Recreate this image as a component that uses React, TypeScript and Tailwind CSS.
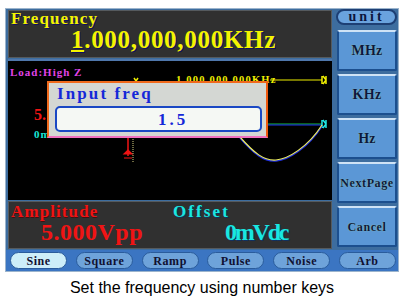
const serif = "font-['Liberation_Serif','Times_New_Roman',serif] font-bold";

function SideButton({ label, small }: { label: string; small?: boolean }) {
  return (
    <div
      className={`h-[41px] flex items-center justify-center bg-[#5b97d6] border-2 border-[#1c4f8e] border-t-[#cfe3f6] rounded-[2px] text-[#0c1640] ${serif} ${
        small ? "text-[12px] tracking-[0.6px]" : "text-[14px] tracking-[0.3px]"
      } [text-shadow:0_0_1px_#9fe0a0]`}
    >
      {label}
    </div>
  );
}

function Tab({ label, active }: { label: string; active?: boolean }) {
  return (
    <div
      className={`h-[17px] rounded-full flex items-center justify-center border border-[#2a5c9c] text-[12px] tracking-[0.6px] text-[#101030] ${serif} ${
        active ? "bg-[#cdeef9]" : "bg-[#6ea3da]"
      }`}
    >
      {label}
    </div>
  );
}

export default function App() {
  const tabs = ["Sine", "Square", "Ramp", "Pulse", "Noise", "Arb"];
  return (
    <div className="w-[404px] h-[300px] bg-white overflow-hidden">
      <div className="ml-[5px] mt-[8px] w-[394px] h-[264px] bg-[#3d6d9f] border border-[#9cb4cc] flex flex-col">
        <div className="flex h-[241px]">
          {/* left: readouts + scope */}
          <div className="w-[324px] ml-[2px] mt-[1px] flex flex-col gap-[1px]">
            <div className="h-[48px] bg-[#303030] border border-[#555a5e] px-[2px]">
              <div className={`text-[17px] leading-[17px] -mt-[1px] tracking-[1.1px] text-[#f4f400] ${serif} [text-shadow:1px_1px_0_#101060]`}>
                Frequency
              </div>
              <div className={`ml-[60px] text-[25px] leading-[25px] tracking-[0.7px] text-[#f4f400] ${serif} [text-shadow:1px_1px_0_#101060]`}>
                <span className="underline decoration-2 underline-offset-[2px]">1</span>.000,000,000KHz
              </div>
            </div>

            <div className="h-[141px] bg-black border-t-2 border-[#4f77ab] relative overflow-hidden">
              <div className={`absolute left-[2px] top-[6px] text-[11px] leading-[11px] tracking-[1px] text-[#e044e8] ${serif}`}>
                Load:High Z
              </div>
              <div className={`absolute left-[168px] top-[13px] text-[10.5px] leading-[11px] tracking-[1.2px] text-[#f0f000] ${serif}`}>
                1.000,000,000KHz
              </div>
              <div className={`absolute left-[26px] top-[46px] text-[16px] leading-[16px] text-[#f01414] ${serif}`}>5.</div>
              <div className={`absolute left-[26px] top-[68px] text-[11px] leading-[11px] tracking-[1px] text-[#18e8d8] ${serif}`}>0mVdc</div>

              <svg className="absolute left-0 top-0" width="324" height="141" viewBox="0 0 324 141">
                <path d="M126 17 l2 3 l2 -3" stroke="#f0f000" strokeWidth="1.5" fill="none" />
                <line x1="262" y1="19" x2="314" y2="19" stroke="#f0f000" strokeWidth="1" />
                <path d="M314 15 v8 M315 15 l3 4 l-3 4 M318 15 v8" stroke="#f0f000" strokeWidth="1.5" fill="none" />
                <line x1="260" y1="63" x2="314" y2="63" stroke="#10c040" strokeWidth="1" />
                <line x1="260" y1="64" x2="314" y2="64" stroke="#2030f0" strokeWidth="1" />
                <path d="M314 59 v8 M315 59 l3 4 l-3 4 M318 59 v8" stroke="#20e8e8" strokeWidth="1.5" fill="none" />
                <path d="M232 77 C246 93 256 101 268 100 S300 87 314 65" stroke="#2030e0" strokeWidth="1.5" fill="none" />
                <path d="M232 76 C246 92 256 100 268 99 S300 86 314 64" stroke="#f0f060" strokeWidth="1.2" fill="none" />
                <line x1="120" y1="76" x2="120" y2="95" stroke="#f01414" strokeWidth="1.5" />
                <path d="M116 93 h8 l-4 -4 z M116 97 h8" stroke="#f01414" strokeWidth="1.2" fill="#f01414" />
                <line x1="125" y1="76" x2="125" y2="102" stroke="#d8d080" strokeWidth="1" strokeDasharray="1 1" />
              </svg>

              <div className="absolute left-[39px] top-[20px] w-[221px] h-[57px] bg-[#d4d7d3] border-2 border-[#f06a1c] border-b-[#f070c0] border-r-[#f05a10]">
                <div className={`ml-[8px] mt-[2px] text-[17px] leading-[17px] tracking-[2.1px] text-[#1428d8] ${serif}`}>Input freq</div>
                <div className="ml-[6px] mt-[4px] w-[207px] h-[26px] bg-[#f5f8f4] border-2 border-[#1a48c4] rounded-[5px] flex items-center">
                  <span className={`pl-[101px] text-[17px] leading-[17px] tracking-[3px] text-[#1428d8] ${serif}`}>1.5</span>
                </div>
              </div>
            </div>

            <div className="h-[48px] bg-[#303030] border border-[#555a5e] px-[2px]">
              <div className="flex">
                <div className="w-[162px]">
                  <div className={`text-[17px] leading-[16px] mt-[2px] tracking-[1.1px] text-[#f01414] ${serif} [text-shadow:1px_1px_0_#401010]`}>
                    Amplitude
                  </div>
                  <div className={`ml-[30px] text-[24px] leading-[24px] tracking-[0.5px] text-[#f01414] ${serif}`}>
                    5.000Vpp
                  </div>
                </div>
                <div>
                  <div className={`text-[17px] leading-[16px] mt-[2px] tracking-[2.1px] text-[#18e8e0] ${serif} [text-shadow:1px_1px_0_#103060]`}>
                    Offset
                  </div>
                  <div className={`ml-[52px] text-[24px] leading-[24px] tracking-[-2.2px] text-[#18e8e0] ${serif} [text-shadow:1px_1px_0_#103060]`}>
                    0mVdc
                  </div>
                </div>
              </div>
            </div>
          </div>

          {/* right: unit keys */}
          <div className="flex-1 ml-[3px] mr-[1px] flex flex-col">
            <div className={`ml-[1px] h-[16px] rounded-full bg-[#6aa3de] border-2 border-[#1d3f74] flex items-center justify-center text-[14px] leading-[14px] tracking-[3px] text-[#0c1640] ${serif}`}>
              unit
            </div>
            <div className="mt-[5px] ml-[2px] flex flex-col gap-[3px]">
              <SideButton label="MHz" />
              <SideButton label="KHz" />
              <SideButton label="Hz" />
              <SideButton label="NextPage" small />
              <SideButton label="Cancel" small />
            </div>
          </div>
        </div>

        {/* waveform tabs */}
        <div className="h-[21px] bg-[#3b75c2] grid grid-cols-6 gap-x-[8.6px] pl-[4px] pr-[2px] pt-[2px]">
          {tabs.map((t, i) => (
            <Tab key={t} label={t} active={i === 0} />
          ))}
        </div>
      </div>

      <p className="mt-[6px] text-center text-[16px] leading-[20px] text-black font-['Liberation_Sans',Arial,sans-serif]">
        Set the frequency using number keys
      </p>
    </div>
  );
}
